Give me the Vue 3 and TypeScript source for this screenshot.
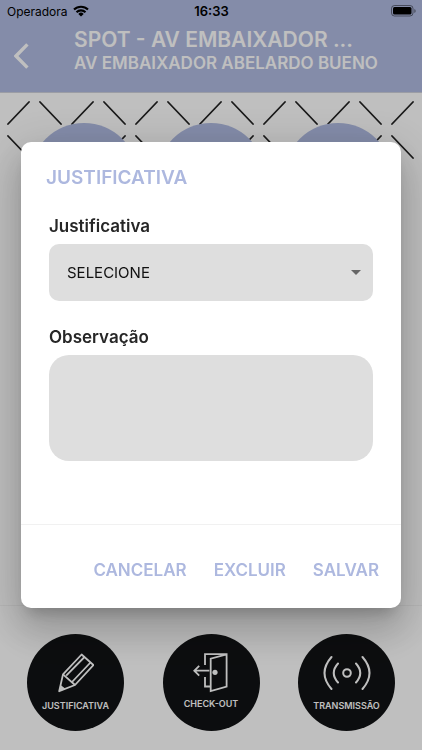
<script setup lang="ts">
import { computed, ref } from 'vue'

interface FooterAction {
  id: 'justify' | 'checkout' | 'transmit'
  label: string
}

const title = 'SPOT - AV EMBAIXADOR ...'
const subtitle = 'AV EMBAIXADOR ABELARDO BUENO'
const reason = ref('')
const note = ref('')

const footerActions: FooterAction[] = [
  { id: 'justify', label: 'JUSTIFICATIVA' },
  { id: 'checkout', label: 'CHECK-OUT' },
  { id: 'transmit', label: 'TRANSMISSÃO' },
]

const crosses = computed<string>(() => {
  const parts: string[] = []
  for (let i = 0; i < 7; i++) {
    const x = 8 + i * 64
    parts.push(`M${x} 31l21-22M${x} 43l21 22`)
    if (i < 6) parts.push(`M${x + 32} 9l21 22M${x + 32} 65l21-22`)
  }
  return parts.join('')
})
</script>

<template>
  <div class="page">
    <header class="header">
      <div class="status">
        <span class="carrier">
          Operadora
          <svg class="wifi" viewBox="0 0 16 12" aria-hidden="true">
            <path d="M1 4.6a10 10 0 0 1 14 0M3.5 7.2a6.4 6.4 0 0 1 9 0" fill="none" stroke="#000" stroke-width="2.1" />
            <path d="M8 11.6 5.3 8.9a3.9 3.9 0 0 1 5.4 0z" />
          </svg>
        </span>
        <span class="clock">16:33</span>
        <svg class="battery" viewBox="0 0 25 12" aria-hidden="true">
          <rect x=".5" y=".5" width="21.5" height="10.5" rx="3" fill="none" stroke="#000" stroke-opacity=".45" />
          <rect x="2" y="2" width="18.5" height="7.5" rx="1.5" />
          <path d="M23.4 4v4q1.2-.7 1.2-2t-1.2-2z" fill-opacity=".5" />
        </svg>
      </div>
      <div class="bar">
        <button class="back" type="button" aria-label="Voltar">
          <svg viewBox="0 0 15 26" aria-hidden="true">
            <path d="M13.4 1.4 2 13l11.4 11.6" fill="none" stroke="#fff" stroke-width="3.4" />
          </svg>
        </button>
        <div class="headings">
          <h1>{{ title }}</h1>
          <p>{{ subtitle }}</p>
        </div>
      </div>
    </header>

    <main class="content">
      <svg class="pattern" viewBox="0 0 422 90" aria-hidden="true">
        <path :d="crosses" fill="none" stroke="#222" stroke-width="1.8" stroke-linecap="round" />
        <g fill="#b0bbe2">
          <circle cx="84" cy="84" r="54" />
          <circle cx="211" cy="84" r="54" />
          <circle cx="338" cy="84" r="54" />
        </g>
      </svg>
    </main>

    <footer class="footer">
      <button v-for="action in footerActions" :key="action.id" class="round" :class="action.id" type="button">
        <svg v-if="action.id === 'justify'" viewBox="0 0 36 40" aria-hidden="true">
          <g fill="none" stroke="#fff" stroke-width="1.8" stroke-linejoin="round">
            <path d="M1.2 38.2 5 21.4 23.6 1.5 35.4 12 17 32z" />
            <path d="M5 21.4 17 32M2.4 33l4.2 3.2" />
            <path d="M8.2 22.7 26.5 4M14 29 32.5 9.5" />
          </g>
          <path d="M1.2 38.2 2.4 33l4.2 3.2z" fill="#fff" />
        </svg>
        <svg v-else-if="action.id === 'checkout'" viewBox="0 0 36 40" aria-hidden="true">
          <g fill="none" stroke="#fff" stroke-width="1.8">
            <path d="M12 12V1.2h21.6v32.4L17.7 38V5.6l15.9-4.2M12 24v9.5h5.7" />
            <path d="M16.400 17.700H2M6.200 12.800 1.300 17.700l4.900 4.900" />
          </g>
          <circle cx="22" cy="19.300" r="2.600" fill="#fff" />
        </svg>
        <svg v-else class="waves" viewBox="0 0 48 40" aria-hidden="true">
          <g fill="none" stroke="#fff" stroke-width="2" stroke-linecap="round">
            <circle cx="24" cy="20" r="3.800" />
            <path d="M8.500 4q-14 16 0 32M39.500 4q14 16 0 32M15 10.500q-8.500 9.500 0 19M33 10.500q8.500 9.500 0 19" />
          </g>
        </svg>
        <span>{{ action.label }}</span>
      </button>
    </footer>

    <div class="backdrop">
      <form class="dialog" role="dialog" aria-labelledby="dialog-title" @submit.prevent>
        <h2 id="dialog-title">JUSTIFICATIVA</h2>
        <div class="fields">
          <label for="reason">Justificativa</label>
          <div class="select-wrap">
            <select id="reason" v-model="reason">
              <option value="">SELECIONE</option>
            </select>
            <svg class="arrow" viewBox="0 0 10 5" aria-hidden="true"><path d="M0 0h10L5 5z" fill="#666" /></svg>
          </div>
          <label for="note">Observação</label>
          <textarea id="note" v-model="note"></textarea>
        </div>
        <div class="actions">
          <button type="button">CANCELAR</button>
          <button type="button">EXCLUIR</button>
          <button type="submit">SALVAR</button>
        </div>
      </form>
    </div>
  </div>
</template>

<style>
body {
  margin: 0;
}
</style>

<style scoped>
* {
  box-sizing: border-box;
}
.page {
  display: flex;
  flex-direction: column;
  min-height: 100vh;
  background: #fff;
  font-family: Inter, "Liberation Sans", sans-serif;
}
h1,
h2,
p {
  margin: 0;
}
button {
  padding: 0;
  border: 0;
  background: none;
  font: inherit;
  cursor: pointer;
}
svg {
  display: block;
}
.header {
  background: #b0bbe2;
  border-bottom: 1px solid #cfd2dc;
}
.status {
  display: grid;
  grid-template-columns: 1fr auto 1fr;
  align-items: center;
  height: 22px;
  padding: 0 6px 0 7px;
  font-size: 12px;
  color: #000;
}
.carrier {
  display: flex;
  align-items: center;
  gap: 5px;
}
.wifi {
  width: 16px;
  height: 12px;
}
.clock {
  font-size: 13px;
  font-weight: 600;
}
.battery {
  width: 25px;
  height: 12px;
  justify-self: end;
}
.bar {
  display: flex;
  align-items: flex-start;
  gap: 45px;
  padding: 6px 14px 18px;
}
.back {
  padding-top: 15px;
}
.back svg {
  width: 15px;
  height: 26px;
}
.headings {
  color: #fff;
  white-space: nowrap;
}
h1 {
  font-size: 21px;
  line-height: 24px;
  font-weight: 600;
}
p {
  font-size: 17px;
  line-height: 22px;
  font-weight: 600;
}
.content {
  flex: 1;
}
.pattern {
  width: 100%;
}
.footer {
  display: flex;
  justify-content: space-between;
  padding: 28px 27px 19px;
  border-top: 1px solid #f4f4f4;
}
.round {
  display: flex;
  flex-direction: column;
  align-items: center;
  width: 97px;
  height: 97px;
  padding-top: 19px;
  border-radius: 50%;
  background: #111214;
  color: #fff;
  font-size: 9px;
  line-height: 12px;
  font-weight: 600;
}
.round svg {
  width: 36px;
  height: 40px;
  margin-bottom: 7px;
}
.round.checkout svg {
  margin-bottom: 5px;
}
.round .waves {
  width: 48px;
}
.backdrop {
  position: fixed;
  inset: 0;
  display: flex;
  align-items: center;
  padding: 0 21px;
  background: rgba(0, 0, 0, 0.25);
}
.dialog {
  flex: 1;
  min-width: 0;
  border-radius: 10px;
  background: #fff;
  box-shadow:
    0 11px 15px -7px rgba(0, 0, 0, 0.2),
    0 24px 38px 3px rgba(0, 0, 0, 0.14),
    0 9px 46px 8px rgba(0, 0, 0, 0.12);
}
h2 {
  padding: 24px 25px;
  font-size: 19px;
  line-height: 24px;
  font-weight: 600;
  color: #adb8df;
}
.fields {
  display: flex;
  flex-direction: column;
  padding: 2px 28px 63px;
}
label {
  margin-bottom: 8px;
  font-size: 17px;
  line-height: 20px;
  font-weight: 600;
  color: #262626;
}
.select-wrap {
  position: relative;
  margin-bottom: 26px;
}
select {
  display: block;
  appearance: none;
  width: 100%;
  height: 57px;
  padding: 0 18px;
  border: 0;
  border-radius: 10px;
  background: #dedede;
  font: inherit;
  font-size: 15px;
  color: #111;
}
.arrow {
  position: absolute;
  top: 26px;
  right: 12px;
  width: 10px;
  height: 5px;
  pointer-events: none;
}
textarea {
  display: block;
  width: 100%;
  height: 106px;
  padding: 16px 18px;
  border: 0;
  border-radius: 20px;
  background: #dedede;
  font: inherit;
  resize: none;
}
.actions {
  display: flex;
  justify-content: flex-end;
  gap: 27px;
  padding: 34px 22px 27px;
  border-top: 1px solid #f1f1f1;
}
.actions button {
  font-size: 17px;
  line-height: 22px;
  font-weight: 600;
  color: #adb8df;
}
</style>
